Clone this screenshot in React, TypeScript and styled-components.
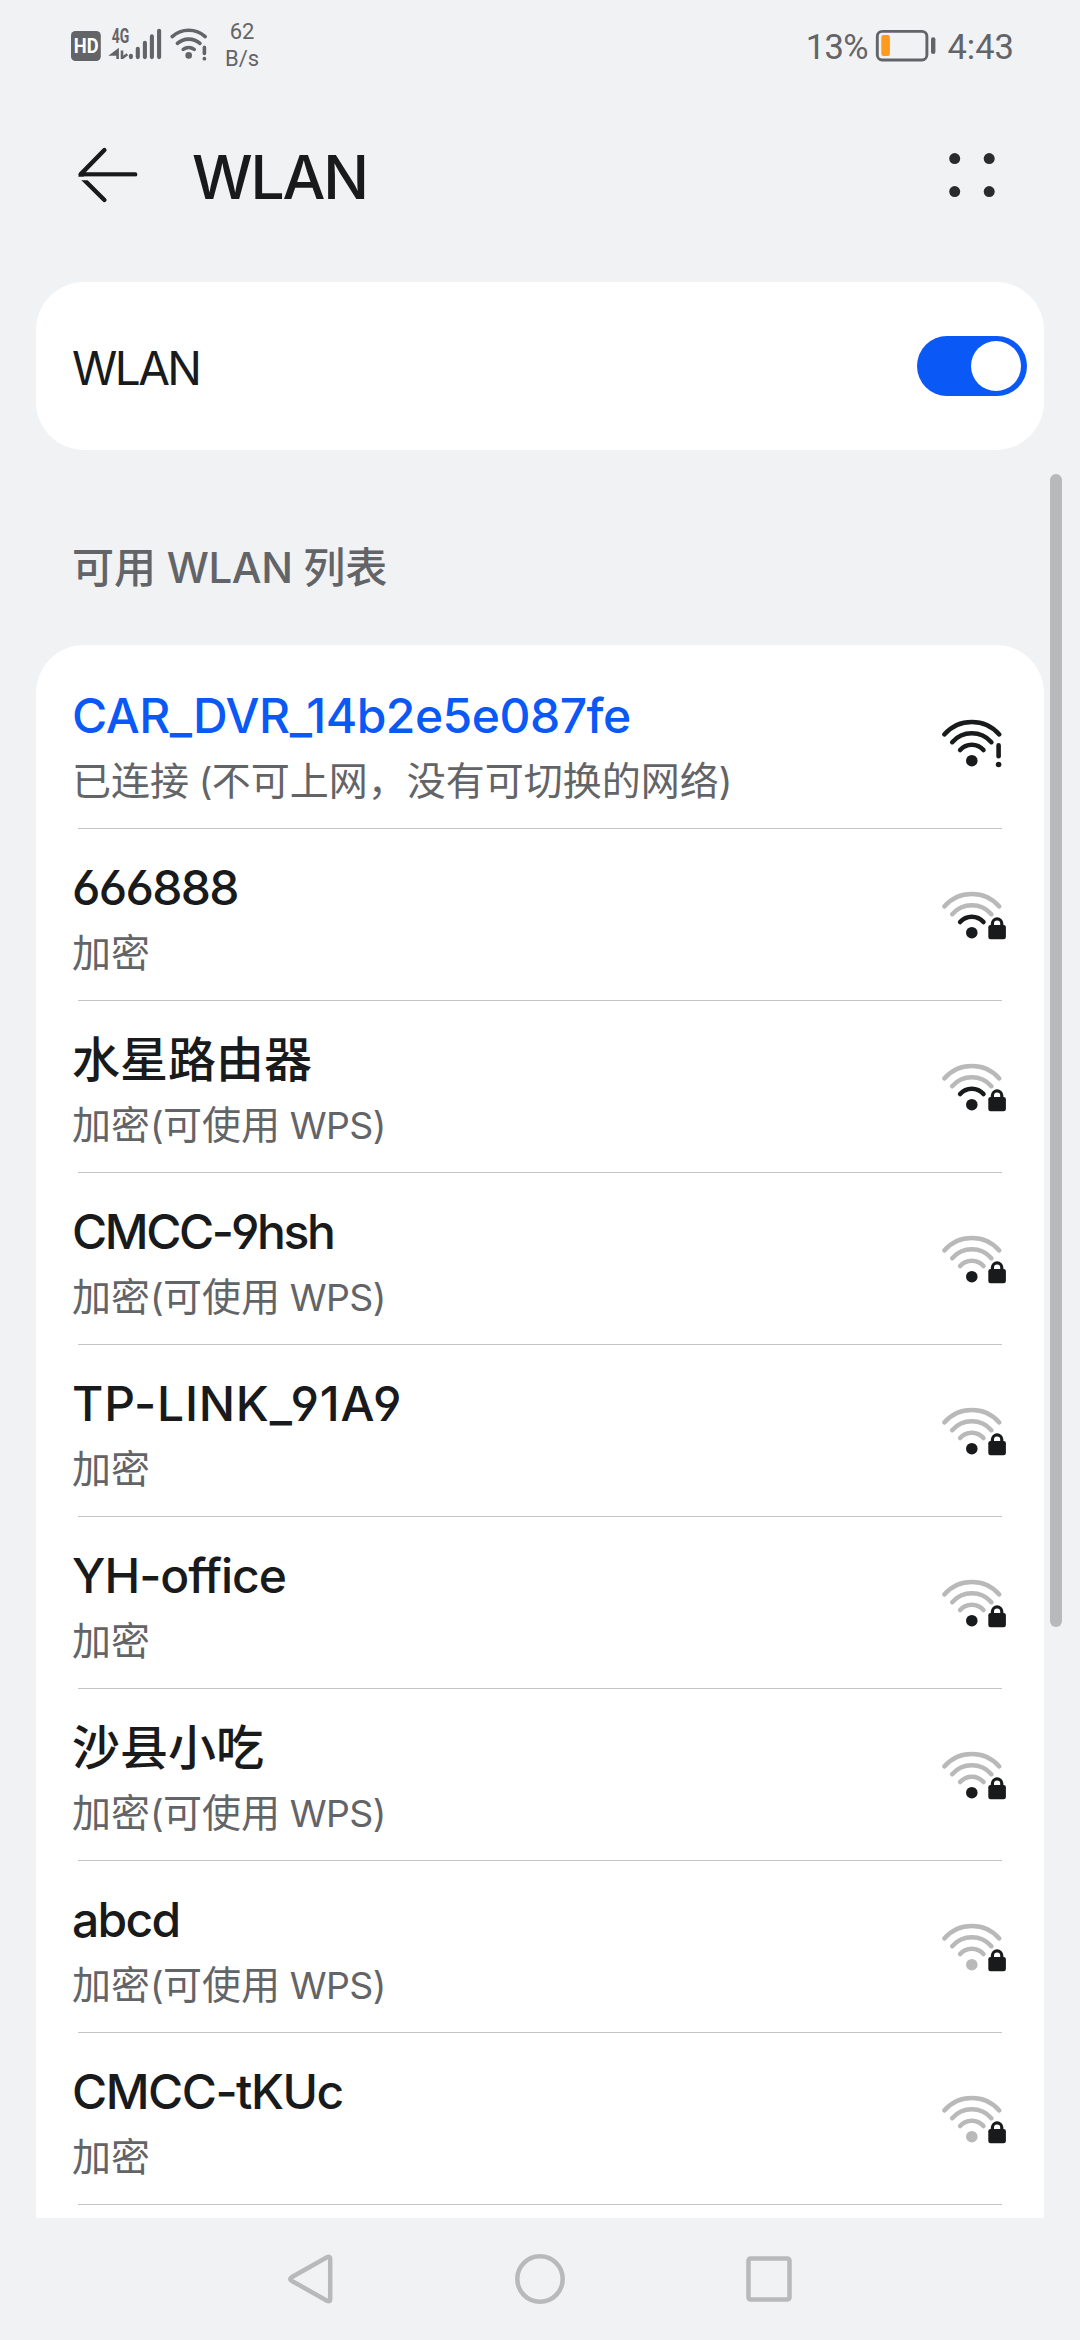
import React from 'react';
import styled, { createGlobalStyle } from 'styled-components';

const ink = '#191a1b';
const grey = '#636467';
const faint = '#b8b9ba';
const blue = '#0a59f7';
const canvas = '#f1f2f4';

const GlobalStyle = createGlobalStyle`
  * { box-sizing: border-box; }
  body {
    margin: 0;
    background: ${canvas};
    color: ${ink};
    font-family: Inter, 'Noto Sans CJK SC', sans-serif;
    font-feature-settings: 'cv03', 'cv04';
  }
`;

const Screen = styled.div`
  position: relative;
  display: flex;
  flex-direction: column;
  width: 1080px;
  height: 2340px;
  overflow: hidden;
  background: ${canvas};
`;

const StatusBar = styled.header`
  display: flex;
  justify-content: space-between;
  align-items: flex-start;
  height: 96px;
  padding: 20px 66px 0 68px;
  color: ${grey};
  font-family: Roboto, sans-serif;
`;

const StatusGroup = styled.div`
  display: flex;
  align-items: flex-start;
`;

const Speed = styled.div`
  display: flex;
  flex-direction: column;
  width: 40px;
  margin: -2px 0 0 10px;
  font-size: 22px;
  line-height: 27px;
  text-align: center;
`;

const StatusText = styled.span<{ $track: number }>`
  font-size: 34.5px;
  line-height: 54px;
  letter-spacing: ${(p) => p.$track}px;
`;

const BatteryIcon = styled.svg`
  margin: 0 10.5px 0 7px;
`;

const TitleBar = styled.div`
  display: flex;
  align-items: center;
  height: 186px;
  padding: 0 84px 28px 72px;
`;

const IconButton = styled.button`
  display: flex;
  padding: 0;
  border: 0;
  background: none;
`;

const Title = styled.h1`
  flex: 1;
  margin: 4px 0 0 48px;
  font-size: 60.5px;
  line-height: 72px;
  font-weight: 500;
  letter-spacing: -2.2px;
`;

const SwitchCard = styled.section`
  display: flex;
  align-items: center;
  justify-content: space-between;
  height: 168px;
  margin: 0 36px;
  padding: 0 17px 0 36px;
  border-radius: 48px;
  background: #fff;
`;

const SwitchLabel = styled.span`
  font-size: 46px;
  line-height: 56px;
  letter-spacing: -2.6px;
  padding-top: 4px;
`;

const Switch = styled.button`
  display: flex;
  justify-content: flex-end;
  width: 110px;
  height: 60px;
  padding: 5px 6px;
  border: 0;
  border-radius: 30px;
  background: ${blue};
`;

const Thumb = styled.span`
  width: 50px;
  height: 50px;
  border-radius: 50%;
  background: #fff;
`;

const Latin = styled.span`
  font-size: 0.96em;
  letter-spacing: -0.018em;
`;

const SectionLabel = styled.h2`
  height: 195px;
  margin: 0;
  padding: 88px 72px 0;
  color: ${grey};
  font-size: 42px;
  line-height: 60px;
  font-weight: 500;

  ${Latin} {
    font-size: 1em;
    letter-spacing: -0.01em;
  }
`;

const ListCard = styled.ul`
  flex: none;
  height: 1573px;
  margin: 0 36px;
  padding: 12px 0 0;
  border-radius: 48px 48px 0 0;
  background: #fff;
  list-style: none;
`;

const Row = styled.li`
  display: flex;
  align-items: center;
  justify-content: space-between;
  height: 172px;
  padding: 0 36px;
  background: linear-gradient(#c4c5c6, #c4c5c6) 42px 100% / 924px 1px no-repeat;
`;

const RowText = styled.div`
  display: flex;
  flex-direction: column;
  gap: 12px;
  height: 172px;
  padding-top: 31px;
`;

const Name = styled.span<{ $active?: boolean; $track: number }>`
  color: ${(p) => (p.$active ? blue : ink)};
  font-size: 48px;
  line-height: 56px;
  font-weight: 500;
  letter-spacing: ${(p) => p.$track}px;
`;

const Detail = styled.span`
  color: ${grey};
  font-size: 39px;
  line-height: 50px;
`;

const NavBar = styled.nav`
  display: flex;
  justify-content: center;
  align-items: center;
  gap: 169px;
  height: 122px;
`;

const ScrollThumb = styled.div`
  position: absolute;
  top: 474px;
  right: 18px;
  width: 12px;
  height: 1153px;
  border-radius: 6px;
  background: #b8b9bb;
`;

type Badge = 'alert' | 'lock';

const Signal = ({ level, badge }: { level: number; badge: Badge }) => {
  const tone = (n: number) => (level >= n ? ink : '#b9b9b9');
  return (
    <svg width="72" height="72" viewBox="0 0 72 72" fill="none" strokeLinecap="round">
      <g strokeWidth="4.5">
        <path d="M8.3 27.4A36.5 36.5 0 0 1 63.3 27.4" stroke={tone(4)} />
        <path d="M16.2 35.2A26 26 0 0 1 55.4 35.2" stroke={tone(3)} />
        <path d="M24.1 43A15.5 15.5 0 0 1 47.5 43" stroke={tone(2)} />
      </g>
      <circle cx="35.8" cy="53.7" r="5.8" fill={tone(1)} />
      {badge === 'alert' ? (
        <g>
          <path d="M62.6 38.4V49.2" stroke={ink} strokeWidth="4.6" />
          <circle cx="62.6" cy="57.5" r="2.8" fill={ink} />
        </g>
      ) : (
        <g>
          <path d="M56.4 47V44.6a4.7 4.7 0 0 1 9.4 0V47" stroke={ink} strokeWidth="3.2" />
          <rect x="52.3" y="46" width="17.6" height="14.2" rx="2.2" fill={ink} />
        </g>
      )}
    </svg>
  );
};

const StatusIcons = () => (
  <svg width="144" height="48" viewBox="68 20 144 48" fill="none">
    <rect x="71" y="31" width="29.8" height="30" rx="4.5" fill={grey} />
    <text x="73.8" y="53.2" fontSize="20" fontWeight="700" fill="#fff" textLength="24.8" lengthAdjust="spacingAndGlyphs">HD</text>
    <text x="111.8" y="42.6" fontSize="19.5" fontWeight="700" fill={grey} textLength="17.5" lengthAdjust="spacingAndGlyphs">4G</text>
    <path d="M117.6 59V50.4L112.2 54.4H117.6M122 50.4V59V58.2L127.4 54.2" stroke={grey} strokeWidth="2.6" />
    <g stroke={grey} strokeWidth="4.1" strokeLinecap="round">
      <path d="M130.9 55.8V57.1M137.8 48.8V57.1M144.9 42.8V57.1M151.9 36.4V57.1M159.1 30.8V57.1" />
    </g>
    <g stroke={grey} strokeWidth="3.6" strokeLinecap="round">
      <path d="M172.2 36.6A24.5 24.5 0 0 1 205.2 36.6" />
      <path d="M177.4 43.4A17 17 0 0 1 200 43.4" />
      <path d="M183.2 49.4A9.2 9.2 0 0 1 194.2 49.4" />
      <path d="M204.4 47.4V53.4" />
    </g>
    <circle cx="188.7" cy="55.4" r="3.3" fill={grey} />
    <circle cx="204.4" cy="58.7" r="1.9" fill={grey} />
  </svg>
);

const Battery = () => (
  <BatteryIcon width="62" height="48" viewBox="874 20 62 48">
    <rect x="876.3" y="31.4" width="49.6" height="28.6" rx="5" fill="none" stroke={grey} strokeWidth="2.9" />
    <rect x="880.3" y="35" width="8.6" height="21" rx="2" fill="#ff9a1c" />
    <rect x="930" y="37.2" width="4.4" height="16.8" rx="2" fill={grey} />
  </BatteryIcon>
);

const BackArrow = () => (
  <svg width="72" height="72" viewBox="72 138 72 72" fill="none" stroke={ink} strokeWidth="4.4" strokeLinecap="round">
    <path d="M104.4 149L80.6 173.4H135.2" strokeLinejoin="round" />
    <path d="M80.6 175.4L104.4 199" />
    <path d="M74 177.5H142" stroke={canvas} strokeWidth="3.6" strokeLinecap="butt" />
  </svg>
);

const MoreDots = () => (
  <svg width="48" height="48" viewBox="948 149 48 48" fill="#2a2b2d">
    <circle cx="954.7" cy="156.6" r="5.5" />
    <circle cx="989.2" cy="156.6" r="5.5" />
    <circle cx="954.7" cy="189.6" r="5.5" />
    <circle cx="989.2" cy="189.6" r="5.5" />
  </svg>
);

const NavIcon = styled.svg.attrs({ width: 60, height: 60, viewBox: '0 0 60 60' })`
  fill: none;
  stroke: ${faint};
  stroke-width: 4.5px;
  stroke-linejoin: round;
`;

/* Latin runs sit a little smaller than the Chinese glyphs beside them. */
const Mixed = ({ text }: { text: string }) => (
  <>
    {text.split(/([ -~]+)/).map((run, i) => (i % 2 ? <Latin key={i}>{run}</Latin> : run))}
  </>
);

interface Network {
  name: string;
  detail: string;
  level: number;
  badge: Badge;
  track: number;
  active?: boolean;
}

const networks: Network[] = [
  { name: 'CAR_DVR_14b2e5e087fe', detail: '已连接 (不可上网，没有可切换的网络)', level: 4, badge: 'alert', track: -0.5, active: true },
  { name: '666888', detail: '加密', level: 2, badge: 'lock', track: -1.7 },
  { name: '水星路由器', detail: '加密(可使用 WPS)', level: 2, badge: 'lock', track: 0 },
  { name: 'CMCC-9hsh', detail: '加密(可使用 WPS)', level: 1, badge: 'lock', track: -2.4 },
  { name: 'TP-LINK_91A9', detail: '加密', level: 1, badge: 'lock', track: 0.8 },
  { name: 'YH-office', detail: '加密', level: 1, badge: 'lock', track: -1 },
  { name: '沙县小吃', detail: '加密(可使用 WPS)', level: 1, badge: 'lock', track: 0 },
  { name: 'abcd', detail: '加密(可使用 WPS)', level: 0, badge: 'lock', track: -1.7 },
  { name: 'CMCC-tKUc', detail: '加密', level: 0, badge: 'lock', track: -1.5 },
];

export default function App() {
  return (
    <Screen>
      <GlobalStyle />
      <StatusBar>
        <StatusGroup>
          <StatusIcons />
          <Speed>
            <span>62</span>
            <span>B/s</span>
          </Speed>
        </StatusGroup>
        <StatusGroup>
          <StatusText $track={-0.6}>13%</StatusText>
          <Battery />
          <StatusText $track={0}>4:43</StatusText>
        </StatusGroup>
      </StatusBar>
      <TitleBar>
        <IconButton aria-label="返回"><BackArrow /></IconButton>
        <Title>WLAN</Title>
        <IconButton aria-label="更多"><MoreDots /></IconButton>
      </TitleBar>
      <SwitchCard>
        <SwitchLabel>WLAN</SwitchLabel>
        <Switch role="switch" aria-checked="true" aria-label="WLAN"><Thumb /></Switch>
      </SwitchCard>
      <SectionLabel><Mixed text="可用 WLAN 列表" /></SectionLabel>
      <ListCard>
        {networks.map((n) => (
          <Row key={n.name}>
            <RowText>
              <Name $active={n.active} $track={n.track}>{n.name}</Name>
              <Detail><Mixed text={n.detail} /></Detail>
            </RowText>
            <Signal level={n.level} badge={n.badge} />
          </Row>
        ))}
      </ListCard>
      <NavBar>
        <NavIcon><path d="M10.5 28.3L46 8.2Q49.2 6.6 49.2 10V50Q49.2 53.4 46 51.8L10.5 31.7Q8 30 10.5 28.3Z" /></NavIcon>
        <NavIcon><circle cx="30" cy="30" r="22.7" /></NavIcon>
        <NavIcon><rect x="9.5" y="9.5" width="41" height="41" rx="2" /></NavIcon>
      </NavBar>
      <ScrollThumb />
    </Screen>
  );
}
